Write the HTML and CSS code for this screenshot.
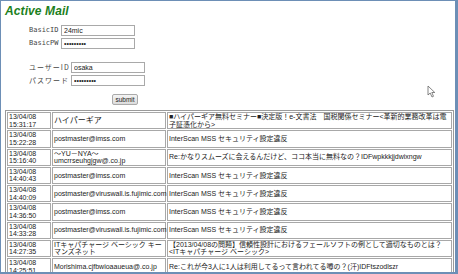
FILE: index.html
```html
<!DOCTYPE html>
<html lang="ja">
<head>
<meta charset="utf-8">
<link rel="stylesheet" href="styles.css">
</head>
<body>
<div class="frame">
  <div class="title">Active Mail</div>
  <div class="login">
    <div class="group">
      <label class="lbl">BasicID</label><input class="field f1" type="text" value="24mic">
      <label class="lbl">BasicPW</label><input class="field f1" type="password" value="abcdefghi">
    </div>
    <div class="group g2">
      <label class="lbl jp">ユーザーID</label><input class="field f1" type="text" value="osaka">
      <label class="lbl jp">パスワード</label><input class="field f1" type="password" value="abcdefghi">
    </div>
    <div class="btnrow"><button class="submit">submit</button></div>
  </div>
  <table class="list">
    <colgroup><col class="c1"><col class="c2"><col class="c3"></colgroup>
    <tr><td><div class="c">13/04/08<br>15:31:17</div></td><td><div class="c big">ハイパーギア</div></td><td><div class="c">■ハイパーギア無料セミナー■決定版！e-文書法　国税関係セミナー&lt;革新的業務改革は電子証憑化から&gt;</div></td></tr>
    <tr><td><div class="c">13/04/08<br>15:22:28</div></td><td><div class="c">postmaster@imss.com</div></td><td><div class="c">InterScan MSS セキュリティ設定違反</div></td></tr>
    <tr><td><div class="c">13/04/08<br>15:16:40</div></td><td><div class="c">～YU－NYA～<br>umcrrseuhgjgw@.co.jp</div></td><td><div class="c">Re:かなりスムーズに会えるんだけど、ココ本当に無料なの？IDFwpkkkjjdwixngw</div></td></tr>
    <tr><td><div class="c">13/04/08<br>14:40:43</div></td><td><div class="c">postmaster@imss.com</div></td><td><div class="c">InterScan MSS セキュリティ設定違反</div></td></tr>
    <tr><td><div class="c">13/04/08<br>14:40:09</div></td><td><div class="c">postmaster@viruswall.is.fujimic.com</div></td><td><div class="c">InterScan MSS セキュリティ設定違反</div></td></tr>
    <tr><td><div class="c">13/04/08<br>14:36:50</div></td><td><div class="c">postmaster@imss.com</div></td><td><div class="c">InterScan MSS セキュリティ設定違反</div></td></tr>
    <tr><td><div class="c">13/04/08<br>14:33:28</div></td><td><div class="c">postmaster@viruswall.is.fujimic.com</div></td><td><div class="c">InterScan MSS セキュリティ設定違反</div></td></tr>
    <tr><td><div class="c">13/04/08<br>14:27:35</div></td><td><div class="c">ITキャパチャージ ベーシック キーマンズネット</div></td><td><div class="c">【2013/04/08の問題】信頼性設計におけるフェールソフトの例として適切なものとは？&lt;ITキャパチャージ ベーシック&gt;</div></td></tr>
    <tr><td><div class="c">13/04/08<br>14:25:51</div></td><td><div class="c">Morishima.cjfbwioaaueua@.co.jp</div></td><td><div class="c">Re:これが今3人に1人は利用してるって言われてる噂の？(汗)IDFtszodlszr</div></td></tr>
  </table>
  <svg class="cursor" width="9" height="13" viewBox="0 0 9 13"><path d="M1 1 L1 10 L3.2 8 L5 12 L6.5 11.3 L4.8 7.5 L7.8 7.5 Z" fill="#fff" stroke="#666" stroke-width="0.8"/></svg>
</div>
</body>
</html>
```
FILE: styles.css
```css
html, body { margin: 0; padding: 0; background: #fff; }
.frame {
  position: relative;
  width: 458px; height: 274px; box-sizing: border-box;
  border-left: 1px solid #6d8fb6; border-top: 1px solid #6d8fb6;
  border-right: 3px solid #6d8fb6; border-bottom: 2px solid #6d8fb6;
  overflow: hidden; background: #fff;
  padding: 3px 0 0 3px;
  font-family: "Liberation Sans", "Noto Sans CJK JP", sans-serif;
  color: #222;
}
.title {
  font: italic bold 12px/14px "Liberation Sans", sans-serif;
  color: #1c7f1c; margin-left: 1px; letter-spacing: 0.1px;
}
.login { margin-left: 25px; margin-top: 7px; }
.group { display: grid; grid-template-columns: 32px 74px; row-gap: 2px; align-items: center; }
.group.g2 { grid-template-columns: 42px 74px; margin-top: 13px; }
.lbl { font: 7px/11px "DejaVu Sans Mono", "Noto Sans CJK JP", monospace; color: #444; }
.lbl.jp { font: 7px/11px "Noto Sans CJK JP", sans-serif; letter-spacing: 1px; }
.field {
  box-sizing: border-box; height: 11px; width: 74px; margin: 0; padding: 0 2px;
  border: 1px solid #a9a9a9; font: 7px/9px "Liberation Sans", sans-serif; color: #222; background: #fff;
}
.btnrow { margin-left: 83px; margin-top: 2px; }
.submit {
  box-sizing: border-box; height: 11px; width: 26px; padding: 0; margin: 0;
  font: 6.5px/9px "Liberation Sans", sans-serif; color: #222;
  border: 1px solid #aaa; border-radius: 2px; background: linear-gradient(#f4f4f4, #dcdcdc);
}
.list {
  margin-top: 4px; margin-left: 1px; width: 449px;
  border: 1px solid #9a9a9a; border-collapse: separate; border-spacing: 1px;
  table-layout: fixed; font-size: 7px; line-height: 7.6px;
}
.c1 { width: 44px; } .c2 { width: 114px; }
.list td { border: 1px solid #a8a8a8; padding: 0 1px; vertical-align: middle; }
.c { height: 15.25px; display: flex; flex-direction: column; justify-content: center; overflow: visible; }
.c.big { font-size: 8px; }
.cursor { position: absolute; left: 426px; top: 84px; }
```
